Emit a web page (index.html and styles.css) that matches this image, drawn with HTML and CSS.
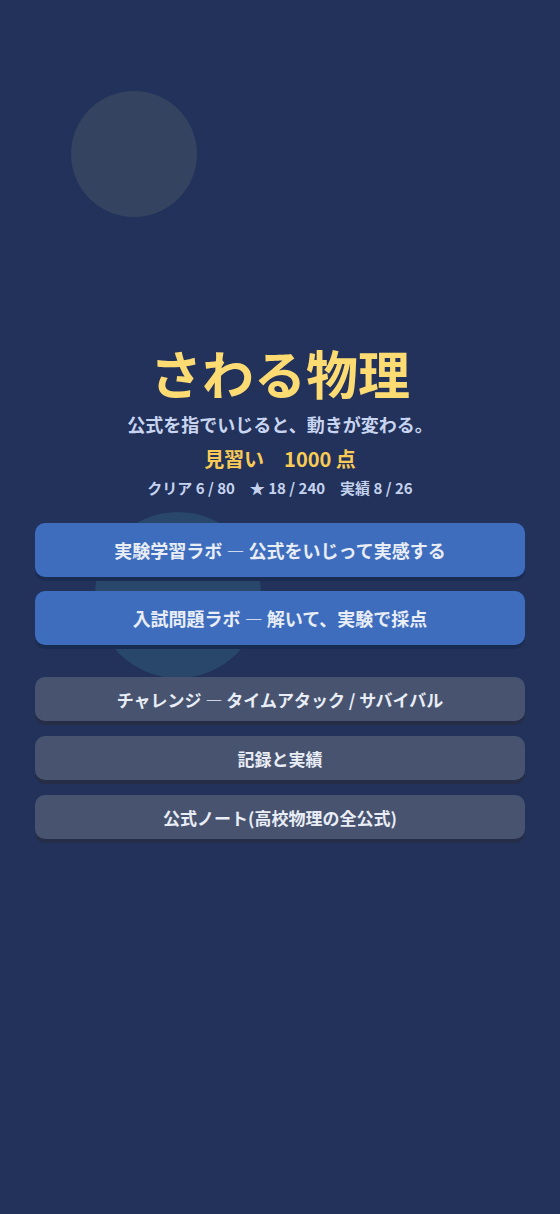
FILE: index.html
```html
<!DOCTYPE html>
<html lang="ja">
<head>
<meta charset="UTF-8">
<meta name="viewport" content="width=device-width, initial-scale=1.0">
<title>さわる物理</title>
<link rel="stylesheet" href="styles.css">
</head>
<body>
<div class="bg-dot dot-a"></div>
<div class="bg-dot dot-b"></div>

<div class="home">
    <h1 class="title">さわる物理</h1>
    <p class="tagline">公式を指でいじると、動きが変わる。</p>
    <p class="rank">見習い　1000 点</p>
    <p class="stats">クリア 6 / 80　★ 18 / 240　実績 8 / 26</p>

    <div class="menu">
        <button class="btn btn-main">実験学習ラボ — 公式をいじって実感する</button>
        <button class="btn btn-main">入試問題ラボ — 解いて、実験で採点</button>
    </div>

    <div class="menu menu-sub">
        <button class="btn btn-sub">チャレンジ — タイムアタック / サバイバル</button>
        <button class="btn btn-sub">記録と実績</button>
        <button class="btn btn-sub">公式ノート(高校物理の全公式)</button>
    </div>
</div>
</body>
</html>
```

FILE: styles.css
```css
body {
    margin: 0;
    padding: 0;
    min-height: 100vh;
    background-color: #22325b;
    font-family: "Noto Sans CJK JP", "Noto Sans", sans-serif;
    overflow: hidden;
}

.bg-dot {
    position: absolute;
    border-radius: 50%;
    z-index: 0;
}
.dot-a {
    left: 71px;
    top: 91px;
    width: 126px;
    height: 126px;
    background-color: #34435f;
}
.dot-b {
    left: 95px;
    top: 512px;
    width: 166px;
    height: 166px;
    background-color: #28476a;
}

.home {
    position: relative;
    z-index: 1;
    padding: 342px 35px 0;
    text-align: center;
}

.title {
    margin: 0;
    font-size: 52px;
    line-height: 62px;
    font-weight: 700;
    color: #fddb73;
}
.tagline {
    margin: 7px 0 0;
    font-size: 18px;
    line-height: 27px;
    font-weight: 700;
    color: #c9d5f0;
}
.rank {
    margin: 7px 0 0;
    font-size: 20px;
    line-height: 27px;
    font-weight: 700;
    color: #f7cb55;
}
.stats {
    margin: 5px 0 0;
    font-size: 15px;
    line-height: 22px;
    font-weight: 700;
    color: #c5d2ee;
}

.menu {
    display: flex;
    flex-direction: column;
    gap: 14px;
    margin-top: 24px;
}
.menu-sub {
    gap: 15px;
    margin-top: 32px;
}

.btn {
    display: block;
    width: 100%;
    border: none;
    border-radius: 10px;
    font-family: inherit;
    font-weight: 700;
    color: #e8edf6;
    cursor: pointer;
}
.btn-main {
    height: 54px;
    font-size: 18px;
    background-color: #3f6dbe;
    box-shadow: 0 4px 0 #1b2c52;
}
.btn-sub {
    height: 44px;
    font-size: 17px;
    background-color: #48546f;
    box-shadow: 0 4px 0 #252e46;
}
```
